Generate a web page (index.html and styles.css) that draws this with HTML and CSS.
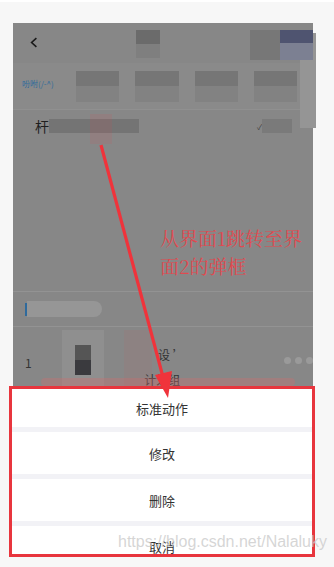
FILE: index.html
```html
<!DOCTYPE html>
<html lang="zh">
<head>
<meta charset="utf-8">
<title>弹框</title>
<link rel="stylesheet" href="styles.css">
</head>
<body>
<div class="page">
  <div class="phone">
    <div class="side-panel"></div>
    <div class="topbar">
      <svg class="back" width="10" height="13" viewBox="0 0 10 13"><path d="M8 1 L2 6.5 L8 12" fill="none" stroke="#1a1a1a" stroke-width="2"/></svg>
      <div class="mz mz-title"><span class="mz-d"></span><span class="mz-l"></span></div>
      <div class="mz-right"><span class="mzr-a"></span><span class="mzr-b"></span></div>
    </div>
    <div class="tabs">
      <span class="tab-label">吩咐(/-^)</span>
      <div class="tab-mz"><span></span><span></span></div>
      <div class="tab-mz"><span></span><span></span></div>
      <div class="tab-mz"><span></span><span></span></div>
      <div class="tab-mz"><span></span><span></span></div>
    </div>
    <div class="row3">
      <span class="row3-text">杆</span>
      <span class="row3-mz"></span>
      <span class="row3-check">✓</span>
      <span class="row3-mz2"></span>
    </div>
    <div class="section">
      <span class="sec-bar"></span>
      <span class="sec-mz"></span>
    </div>
    <div class="item">
      <span class="item-num">1</span>
      <div class="item-img"><span class="img-core"></span></div>
      <div class="item-body">
        <span class="item-t1">设 ’</span>
        <span class="item-t2">计划组</span>
      </div>
      <div class="dots"><i></i><i></i><i></i></div>
      <span class="pink-band"></span>
    </div>
  </div>
  <div class="sheet">
    <div class="opt opt-first">标准动作</div>
    <div class="opt">修改</div>
    <div class="opt">删除</div>
    <div class="opt opt-last">取消</div>
  </div>
  <div class="note">从界面1跳转至界面2的弹框</div>
  <svg class="arrow" width="334" height="567" viewBox="0 0 334 567">
    <rect x="90" y="112" width="22" height="30" fill="#e24b50" opacity="0.12"/>
    <line x1="101" y1="143" x2="163" y2="375" stroke="#f0333b" stroke-width="3.2"/>
    <polygon points="155,373 172,369 168,396" fill="#f0333b"/>
  </svg>
  <div class="watermark">https://blog.csdn.net/Nalaluky</div>
</div>
</body>
</html>
```
FILE: styles.css
```css
* { box-sizing: border-box; }
html, body { margin: 0; padding: 0; }
body {
  background: #f7f7f7;
  font-family: "Noto Sans CJK SC", "Noto Sans", sans-serif;
  width: 334px;
  height: 567px;
  overflow: hidden;
}
.page {
  position: relative;
  width: 334px;
  height: 567px;
  border-top: 2px solid #fff;
  padding-top: 21px;
}
.phone {
  position: relative;
  margin-left: 13px;
  width: 300px;
  height: 363px;
  background: #878787;
  display: flex;
  flex-direction: column;
}
.side-panel {
  position: absolute;
  right: -3px;
  top: 10px;
  width: 16px;
  height: 95px;
  background: #959595;
}
.topbar {
  height: 40px;
  display: flex;
  align-items: flex-start;
  padding-top: 7px;
  position: relative;
}
.back { margin: 6px 0 0 17px; }
.mz-title {
  margin-left: 98px;
  width: 30px;
  height: 28px;
  display: flex;
  flex-direction: column;
}
.mz-d { height: 14px; background: #6b6b6b; }
.mz-l { height: 14px; background: #7f7f7f; }
.mz-right {
  margin-left: 90px;
  width: 63px;
  height: 30px;
  display: flex;
  z-index: 1;
}
.mzr-a { width: 30px; background: #777; }
.mzr-b { width: 33px; background: linear-gradient(#4f5470 0 45%, #7c8092 45%); }
.tabs {
  height: 47px;
  display: flex;
  align-items: center;
  padding-left: 9px;
  background: #8a8a8a;
  border-bottom: 1px solid #909090;
}
.tab-label {
  font-size: 8px;
  color: #2f6a9c;
  width: 55px;
  margin-top: -6px;
}
.tab-mz {
  width: 44px;
  height: 31px;
  margin-right: 16px;
  display: flex;
  flex-direction: column;
}
.tab-mz span:first-child { height: 15px; background: #767676; }
.tab-mz span:last-child { height: 16px; background: #828282; }
.row3 {
  height: 32px;
  display: flex;
  align-items: center;
  padding-left: 22px;
}
.row3-text { font-size: 14px; color: #1f1f1f; line-height: 14px; }
.row3-mz { width: 90px; height: 14px; background: #747474; }
.row3-check { margin-left: 118px; font-size: 8px; color: #444; }
.row3-mz2 { width: 30px; height: 14px; background: #7a7a7a; }
.section {
  margin-top: 149px;
  height: 36px;
  border-top: 1px solid #939393;
  border-bottom: 1px solid #939393;
  display: flex;
  align-items: center;
  padding-left: 12px;
}
.sec-bar { width: 2px; height: 13px; background: #2f6a9c; }
.sec-mz { width: 75px; height: 16px; background: #969696; border-radius: 0 8px 8px 0; }
.item {
  flex: 1;
  position: relative;
  display: flex;
  align-items: center;
  padding-left: 12px;
}
.item-num { font-size: 12px; color: #333; margin-top: 12px; }
.item-img {
  margin-left: 30px;
  width: 44px;
  height: 56px;
  align-self: flex-end;
  background: #8f8f8f;
  display: flex;
  justify-content: center;
  padding-top: 15px;
}
.img-core { width: 16px; height: 30px; background: linear-gradient(#555 0 50%, #3a3a3e 50%); }
.item-body {
  margin-left: 20px;
  width: 100px;
  height: 56px;
  align-self: flex-end;
  background: linear-gradient(90deg, #8d8282 0 30%, #878787 30%);
  display: flex;
  flex-direction: column;
  align-items: center;
  justify-content: space-between;
  padding: 18px 0 0;
  font-size: 12px;
  color: #333;
  line-height: 13px;
}
.item-t2 { margin-left: -18px; }
.dots { margin-left: 65px; display: flex; gap: 4px; margin-top: 8px; }
.dots i { width: 7px; height: 7px; border-radius: 50%; background: #9a9a9a; }
.pink-band {
  position: absolute;
  left: 28px;
  right: 18px;
  bottom: 0;
  height: 8px;
  background: rgba(205, 110, 110, 0.35);
  border-radius: 4px;
}
.sheet {
  margin-left: 9px;
  width: 306px;
  height: 171px;
  border: 3px solid #e8353d;
  background: #f2f2f6;
  display: flex;
  flex-direction: column;
  gap: 5px;
  overflow: hidden;
}
.opt {
  background: #fff;
  height: 42px;
  display: flex;
  align-items: center;
  justify-content: center;
  font-size: 13px;
  line-height: 15px;
  color: #333;
  flex-shrink: 0;
}
.opt-first { height: 38px; }
.opt-last { height: 28px; align-items: flex-end; padding-bottom: 0; }
.note {
  position: absolute;
  left: 160px;
  top: 222px;
  width: 156px;
  font-family: "Noto Serif CJK SC", "Liberation Serif", "Noto Sans CJK SC", serif;
  font-size: 19px;
  line-height: 28px;
  color: #df4a50;
}
.arrow {
  position: absolute;
  left: 0;
  top: 0;
  pointer-events: none;
}
.watermark {
  position: absolute;
  left: 118px;
  top: 531px;
  font-family: "Liberation Sans", sans-serif;
  font-size: 16px;
  color: rgba(200, 200, 200, 0.75);
  white-space: nowrap;
}
```
